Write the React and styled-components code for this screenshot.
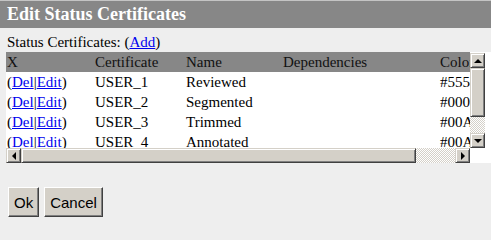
import React from "react";
import styled, { createGlobalStyle, css } from "styled-components";

const GlobalStyle = createGlobalStyle`
  html, body {
    margin: 0;
    padding: 0;
    background: #eeeeee;
    font-family: "Liberation Serif", "Times New Roman", serif;
    font-size: 15px;
    color: #000;
  }
`;

const TitleBar = styled.div`
  height: 27px;
  line-height: 27px;
  border-top: 1px solid #c4c4c4;
  background: #878787;
  color: #ffffff;
  font-weight: bold;
  font-size: 18px;
  padding-left: 7px;
`;

const Label = styled.div`
  padding: 5px 0 0 7px;
  line-height: 19px;
`;

const Link = styled.a`
  color: #0000ee;
  text-decoration: underline;
  cursor: pointer;
`;

const ListBox = styled.div`
  margin-left: 6px;
  display: grid;
  grid-template-columns: 464px 15px 1fr;
  grid-template-rows: 96px 15px;
  background: #ffffff;
`;

const Viewport = styled.div`
  overflow: hidden;
`;

const Table = styled.table`
  table-layout: fixed;
  width: 510px;
  border-collapse: collapse;
`;

const HeadCell = styled.th`
  background: #878787;
  color: #111;
  font-weight: normal;
  text-align: left;
  height: 20px;
  padding: 0 1px;
  white-space: nowrap;
  overflow: hidden;
`;

const Cell = styled.td`
  height: 20px;
  padding: 0 1px;
  white-space: nowrap;
  overflow: hidden;
`;

const bevel = css`
  box-sizing: border-box;
  background: #d4d0c8;
  border: 1px solid;
  border-color: #d4d0c8 #404040 #404040 #d4d0c8;
  box-shadow: inset 1px 1px #ffffff, inset -1px -1px #808080;
`;

const ScrollButton = styled.div`
  ${bevel};
  flex: 0 0 15px;
  width: 15px;
  height: 15px;
  display: flex;
  align-items: center;
  justify-content: center;
`;

const arrows = {
  up: css`
    border-left: 4px solid transparent;
    border-right: 4px solid transparent;
    border-bottom: 4px solid #000;
  `,
  down: css`
    border-left: 4px solid transparent;
    border-right: 4px solid transparent;
    border-top: 4px solid #000;
  `,
  left: css`
    border-top: 4px solid transparent;
    border-bottom: 4px solid transparent;
    border-right: 4px solid #000;
  `,
  right: css`
    border-top: 4px solid transparent;
    border-bottom: 4px solid transparent;
    border-left: 4px solid #000;
  `,
};

const Arrow = styled.span`
  width: 0;
  height: 0;
  ${(p) => arrows[p.$dir]};
`;

const Thumb = styled.div`
  ${bevel};
  flex: 0 0 ${(p) => p.$size}px;
`;

const Track = styled.div`
  flex: 1;
  background-color: #ffffff;
  background-image: repeating-conic-gradient(#d4d0c8 0 25%, #ffffff 0 50%);
  background-size: 2px 2px;
`;

const VScroll = styled.div`
  display: flex;
  flex-direction: column;
  padding-top: 1px;
`;

const HScroll = styled.div`
  display: flex;
`;

const Buttons = styled.div`
  display: flex;
  gap: 5px;
  margin-top: 24px;
  padding-left: 8px;
`;

const Button = styled.button`
  box-sizing: border-box;
  height: 30px;
  padding: 0 5px;
  font-family: "Liberation Sans", Arial, sans-serif;
  font-size: 15px;
  color: #000;
  background: #d4d0c8;
  border: 1px solid;
  border-color: #ffffff #404040 #404040 #ffffff;
  box-shadow: inset -1px -1px #808080;
  cursor: pointer;
`;

const certificates = [
  { id: "USER_1", name: "Reviewed", color: "#555555" },
  { id: "USER_2", name: "Segmented", color: "#000000" },
  { id: "USER_3", name: "Trimmed", color: "#00AA00" },
  { id: "USER_4", name: "Annotated", color: "#00AAFF" },
];

export default function App() {
  return (
    <>
      <GlobalStyle />
      <TitleBar>Edit Status Certificates</TitleBar>
      <Label>
        Status Certificates: (<Link>Add</Link>)
      </Label>
      <ListBox>
        <Viewport>
          <Table>
            <colgroup>
              <col style={{ width: 88 }} />
              <col style={{ width: 91 }} />
              <col style={{ width: 97 }} />
              <col style={{ width: 157 }} />
              <col style={{ width: 77 }} />
            </colgroup>
            <thead>
              <tr>
                <HeadCell>X</HeadCell>
                <HeadCell>Certificate</HeadCell>
                <HeadCell>Name</HeadCell>
                <HeadCell>Dependencies</HeadCell>
                <HeadCell>Color</HeadCell>
              </tr>
            </thead>
            <tbody>
              {certificates.map((c) => (
                <tr key={c.id}>
                  <Cell>
                    (<Link>Del</Link>|<Link>Edit</Link>)
                  </Cell>
                  <Cell>{c.id}</Cell>
                  <Cell>{c.name}</Cell>
                  <Cell></Cell>
                  <Cell>{c.color}</Cell>
                </tr>
              ))}
            </tbody>
          </Table>
        </Viewport>
        <VScroll>
          <ScrollButton>
            <Arrow $dir="up" />
          </ScrollButton>
          <Thumb $size={49} />
          <Track />
          <ScrollButton>
            <Arrow $dir="down" />
          </ScrollButton>
        </VScroll>
        <div style={{ gridRow: "1 / 3", gridColumn: 3 }} />
        <HScroll>
          <ScrollButton>
            <Arrow $dir="left" />
          </ScrollButton>
          <Thumb $size={395} />
          <Track />
          <ScrollButton>
            <Arrow $dir="right" />
          </ScrollButton>
        </HScroll>
      </ListBox>
      <Buttons>
        <Button>Ok</Button>
        <Button>Cancel</Button>
      </Buttons>
    </>
  );
}
